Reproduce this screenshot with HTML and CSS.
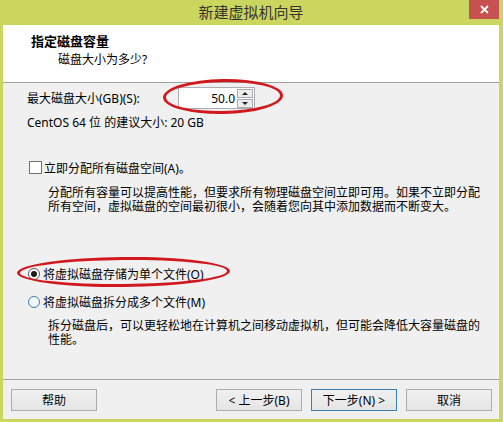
FILE: index.html
```html
<!DOCTYPE html>
<html>

<head>
    <title>新建虚拟机向导</title>
    <link rel="stylesheet" href="styles.css">
</head>

<body>
    <div class="window">
        <div class="titlebar">
            <span></span>
            <div class="title">新建虚拟机向导</div>
            <div class="close">
                <svg width="9" height="9" viewBox="0 0 9 9">
                    <path d="M1 1 L8 8 M8 1 L1 8" stroke="#fff" stroke-width="1.8" fill="none" />
                </svg>
            </div>
        </div>

        <div class="client">
            <div class="header">
                <div class="header-title">指定磁盘容量</div>
                <div class="header-sub">磁盘大小为多少?</div>
            </div>

            <div class="content">
                <div class="size-row">
                    <label>最大磁盘大小(GB)(S):</label>
                    <div class="spinner">
                        <span class="spin-value">50.0</span>
                        <div class="spin-buttons">
                            <span class="spin-btn up"></span>
                            <span class="spin-btn down"></span>
                        </div>
                        <div class="mark mark-size"></div>
                    </div>
                </div>
                <div class="hint">CentOS 64 位 的建议大小: 20 GB</div>

                <div class="check-row">
                    <span class="checkbox"></span>立即分配所有磁盘空间(A)。
                </div>
                <p class="desc">分配所有容量可以提高性能，但要求所有物理磁盘空间立即可用。如果不立即分配所有空间，虚拟磁盘的空间最初很小，会随着您向其中添加数据而不断变大。</p>

                <div class="radio-row first">
                    <span class="radio checked"></span>将虚拟磁盘存储为单个文件(O)
                    <div class="mark mark-radio"></div>
                </div>
                <div class="radio-row second">
                    <span class="radio hover"></span>将虚拟磁盘拆分成多个文件(M)
                </div>
                <p class="desc desc-split">拆分磁盘后，可以更轻松地在计算机之间移动虚拟机，但可能会降低大容量磁盘的性能。</p>
            </div>

            <div class="footer">
                <button class="btn">帮助</button>
                <span class="spacer"></span>
                <button class="btn">&lt; 上一步(B)</button>
                <button class="btn default">下一步(N) &gt;</button>
                <button class="btn">取消</button>
            </div>
        </div>
    </div>
</body>

</html>
```

FILE: styles.css
```css
body {
    margin: 0;
    font-family: "Noto Sans", "Noto Sans CJK SC", sans-serif;
    font-size: 12px;
    color: #000;
}

.window {
    width: 503px;
    height: 422px;
    box-sizing: border-box;
    background-color: #cbd65e;
    padding: 0 4px 3px 3px;
    display: flex;
    flex-direction: column;
}

.titlebar {
    height: 25px;
    display: grid;
    grid-template-columns: 1fr auto 1fr;
}

.title {
    font-size: 15px;
    line-height: 25px;
    color: #333;
}

.close {
    justify-self: end;
    width: 30px;
    height: 19px;
    background-color: #c75050;
    display: flex;
    align-items: center;
    justify-content: center;
}

.client {
    flex: 1;
    display: flex;
    flex-direction: column;
    background-color: #f0f0f0;
}

.header {
    height: 58px;
    box-sizing: border-box;
    background-color: #fff;
    border-bottom: 1px solid #a0a0a0;
    padding: 8px 0 0 28px;
}

.header-title {
    font-size: 13px;
    font-weight: bold;
    line-height: 17px;
}

.header-sub {
    margin-top: 2px;
    margin-left: 27px;
    line-height: 16px;
}

.content {
    flex: 1;
    padding: 4px 0 0 24px;
}

.size-row {
    display: grid;
    grid-template-columns: 151px auto;
    align-items: center;
    height: 22px;
    justify-content: start;
}

.spinner {
    position: relative;
    width: 77px;
    height: 22px;
    box-sizing: border-box;
    border: 1px solid #abadb3;
    background-color: #fff;
    display: flex;
    align-items: center;
    justify-content: flex-end;
    padding-right: 1px;
}

.spin-value {
    margin-right: 2px;
}

.spin-buttons {
    display: flex;
    flex-direction: column;
    gap: 1px;
}

.spin-btn {
    width: 16px;
    height: 9px;
    box-sizing: border-box;
    border: 1px solid #acacac;
    background-color: #ececec;
    display: flex;
    align-items: center;
    justify-content: center;
}

.spin-btn::after {
    content: "";
    border-left: 3px solid transparent;
    border-right: 3px solid transparent;
}

.spin-btn.up::after {
    border-bottom: 3px solid #222;
}

.spin-btn.down::after {
    border-top: 3px solid #222;
}

.mark {
    position: absolute;
    border: 3px solid #d0181e;
    border-radius: 50%;
    box-sizing: border-box;
}

.mark-size {
    left: -16px;
    top: -9px;
    width: 120px;
    height: 35px;
    transform: rotate(-1deg);
}

.hint {
    margin-top: 6px;
    line-height: 15px;
}

.check-row {
    margin-top: 30px;
    height: 15px;
    display: flex;
    align-items: center;
}

.checkbox {
    width: 13px;
    height: 13px;
    box-sizing: border-box;
    border: 1px solid #707070;
    background-color: #fff;
    margin: 0 2px 0 2px;
}

.desc {
    margin: 11px 0 0 0;
    padding-left: 21px;
    width: 438px;
    line-height: 14px;
}

.radio-row {
    position: relative;
    height: 15px;
    display: flex;
    align-items: center;
}

.radio-row.first {
    margin-top: 52px;
}

.radio-row.second {
    margin-top: 13px;
}

.radio {
    width: 12px;
    height: 12px;
    box-sizing: border-box;
    border-radius: 50%;
    border: 1px solid #555;
    background-color: #fff;
    margin: 0 3px 0 1px;
    display: flex;
    align-items: center;
    justify-content: center;
}

.radio.checked::after {
    content: "";
    width: 6px;
    height: 6px;
    border-radius: 50%;
    background-color: #1a1a1a;
}

.radio.hover {
    border-color: #3c7fb1;
    background-color: #f4f9fd;
}

.mark-radio {
    left: -10px;
    top: -9px;
    width: 213px;
    height: 30px;
    transform: rotate(-0.5deg);
}

.desc-split {
    margin-top: 10px;
}

.footer {
    height: 40px;
    box-sizing: border-box;
    border-top: 1px solid #a0a0a0;
    padding: 9px 7px 0 8px;
    display: flex;
    align-items: flex-start;
    gap: 9px;
}

.spacer {
    flex: 1;
}

.btn {
    width: 86px;
    height: 22px;
    padding: 0;
    font-family: inherit;
    font-size: 12px;
    color: #000;
    border: 1px solid #acacac;
    background: linear-gradient(#f0f0f0, #e5e5e5);
}

.btn.default {
    border-color: #3c7fb1;
}
```
